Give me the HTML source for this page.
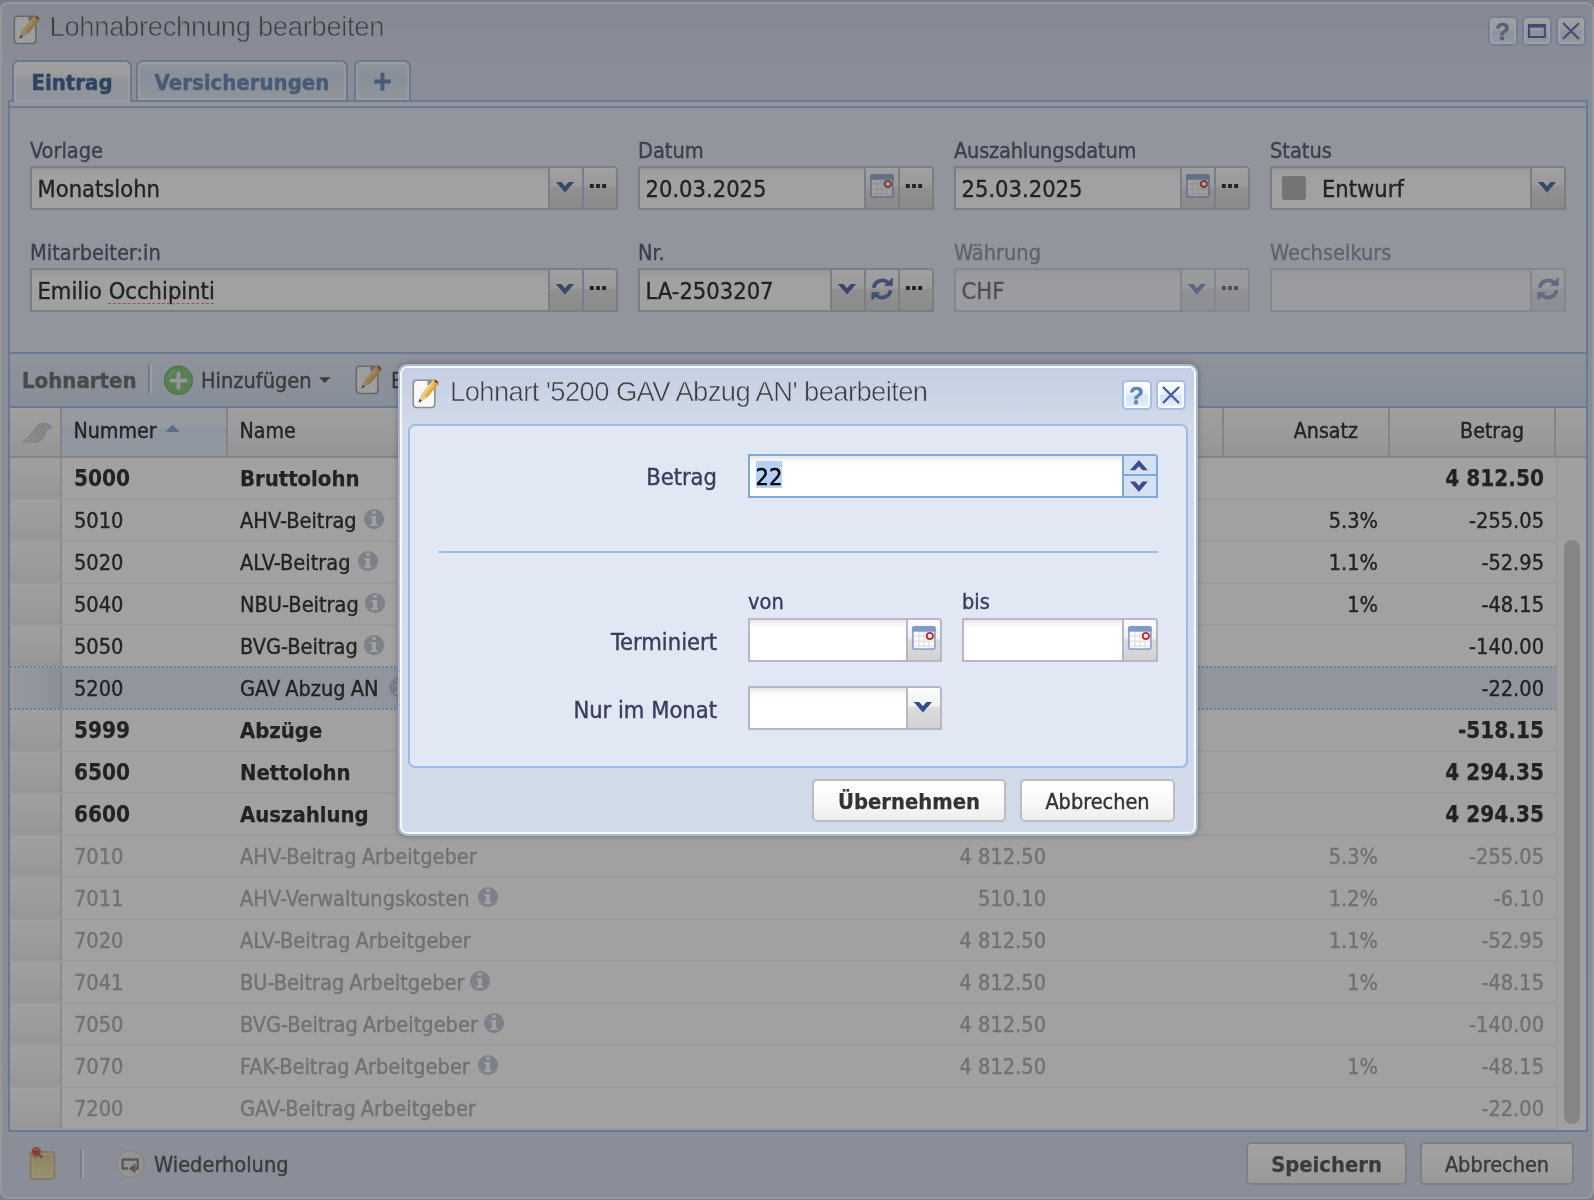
<!DOCTYPE html>
<html lang="de"><head><meta charset="utf-8"><title>Lohnabrechnung bearbeiten</title>
<style>
*{box-sizing:border-box;margin:0;padding:0}
html,body{width:1594px;height:1200px;overflow:hidden}
body{background:#b0bad4;font-family:"DejaVu Sans Condensed","Liberation Sans",sans-serif;font-size:21.6px;color:#000;position:relative;-webkit-text-stroke:.4px}
div,span,i,b{position:absolute;white-space:nowrap;display:block}
svg{position:absolute;left:0;top:0;overflow:visible}
#win{left:0;top:2px;width:1594px;height:1197px;border:2px solid #e6ecf4;border-radius:8px;background:linear-gradient(#c6cee4 0,#cfd6ea 60px,#d0d8ec 100%)}
.title{font-family:"Liberation Sans",sans-serif;font-size:27.4px;color:#3c3c3c;line-height:30px;letter-spacing:-.32px;-webkit-text-stroke:.6px #c7d1e8}
.title.d{letter-spacing:-.6px;-webkit-text-stroke:.6px #cbd4e6}
.tool{width:30px;height:30px;border:2px solid #a3bfec;border-radius:5px;background:linear-gradient(#fff 0,#e9f2fb 49%,#d3e3fa 50%,#e4eefb 100%);box-shadow:inset 0 0 0 2px rgba(255,255,255,.85)}
.tool b{left:0;top:0;width:25px;text-align:center;font-family:"Liberation Sans",sans-serif;font-weight:bold;font-size:24.5px;line-height:27px;color:#5b85b5}
/* tabs */
.tab{top:60px;height:40px;border:2px solid #8db2e3;border-bottom:none;border-radius:7px 7px 0 0;font-weight:bold;font-size:22px;line-height:42px;text-align:center;color:#4a70a8;background:linear-gradient(#eef0f4 0,#d3ddef 5px,#d0dbee 50%,#dfe7f4 100%);box-shadow:inset 0 0 0 2px rgba(255,255,255,.5)}
.tab.act{color:#16427c;background:linear-gradient(#fbfbfb 0,#f4f5f7 12px,#dde6f4 18px,#dbe5f5 100%);height:42px}
#strip{left:8px;top:100px;width:1580px;height:8px;border:2px solid #8db2e3;border-bottom:none;background:#dfe8f7}
#tbody{left:8px;top:106px;width:1580px;height:248px;border:2px solid #8db2e3;background:#e1e7f5}
/* fields */
.lbl{font-size:21.6px;line-height:26px;color:#363959}
.lbl.dis{opacity:.58}
.fld{border-top-right-radius:4px;height:44px;border:2px solid #b5b8c8;background:#fff linear-gradient(#e4e4e4 0,#f3f3f3 3px,#fbfbfb 7px,#fff 11px);font-size:23.5px;line-height:42.6px;color:#000;padding-left:5.5px;overflow:hidden}
.fld.dis{opacity:.6}
.trg{top:0;width:34px;height:40px;border-left:2px solid #b5b8c8;background:linear-gradient(#fdfdfd 0,#f2f2f2 44%,#dcdcdc 50%,#d2d2d2 100%)}
#root{left:0;top:0;width:1594px;height:1200px;will-change:transform}
#mask{left:0;top:0;width:1594px;height:1200px;background:rgba(68,68,68,.5)}
/* grid */
#gtb{left:8px;top:354px;width:1580px;height:53px;border:2px solid #8db2e3;border-top:none;border-bottom:none;background:linear-gradient(#d7e1f4,#cedaf0)}
#grid{left:8px;top:406px;width:1580px;height:726px;border:2px solid #8db2e3;background:#fff;overflow:hidden}
.hd{top:0;height:50px;background:linear-gradient(#fbfbfb 0,#f3f3f3 50%,#e6e6e6 100%);border-right:2px solid #c6c6c6;border-bottom:2px solid #c6c6c6;font-size:21.2px;line-height:46.4px;color:#000;padding:0 11.5px}
.hd.r{text-align:right;padding-right:30px}
.row{left:0;width:1546px;height:42px;border-bottom:2px solid #f0f0f0;background:#fff;font-size:21.6px;line-height:41.4px;color:#000}
.row.b{font-weight:bold;font-size:22.4px;-webkit-text-stroke:.25px}
.row.g{color:#9e9e9e}
.row.sel{background:#dfe8f8}
.row span{top:0}
.row .n{word-spacing:-1.2px}
.row.b .n{font-size:21.9px}
.row i{top:0;left:0;width:52px;height:40px;background:linear-gradient(#fbfbfb 0,#f4f4f4 50%,#eaeaea 100%);border-right:2px solid #d4d4d4}
.row.sel i{background:linear-gradient(90deg,#e9effa 0,#dde5f4 60%,#d0d9ec 100%);border-right-color:#c4c8d2}
.dot{left:0;width:1546px;height:2px;background:repeating-linear-gradient(90deg,#a3bae9 0,#a3bae9 2px,transparent 2px,transparent 4px)}
.btn{height:43px;border:2px solid #bdbdbd;border-radius:5px;background:linear-gradient(#fff 0,#f9f9f9 50%,#ededed 100%);font-size:21.5px;line-height:42.4px;text-align:center;color:#333}
.btn.b{font-weight:bold;font-size:21.8px;-webkit-text-stroke:.25px}
/* dialog */
#dlg{left:398px;top:364px;width:800px;height:472px;border:2px solid #a9b6ce;border-radius:9px;background:linear-gradient(#c5cee3 0,#d1dbe9 60px,#d0dae8 100%);box-shadow:inset 0 0 0 2px #f5f8fc,0 0 6px rgba(0,0,0,.3)}
#dbody{left:408px;top:424px;width:780px;height:344px;border:2px solid #99bbe8;border-radius:7px;background:#e1e8f4}
.dl{font-size:23.5px;line-height:32px;color:#3a3d5c;text-align:right}
.dl2{font-size:21.6px;line-height:28px;color:#3a3d5c}
.fld.foc{border-color:#7eaadb}
.spn{background:#d5e1f2;border-left:2px solid #7eaadb}
.spn.t{border-bottom:2px solid #7eaadb}
</style></head><body><div id="root">
<div id="win"></div>
<svg style="left:12.5px;top:13px" width="30" height="32" viewBox="0 0 30 32">
<rect x="1.3" y="3.3" width="21.5" height="27.2" rx="3.2" fill="#f9f9f9" stroke="#8e8e8e" stroke-width="1.6"/>
<path d="M15.5 3.5 L19.5 3.5 L22.6 6.6 L22.6 8 L15.5 8 Z" fill="#8e8e8e"/>
<g transform="translate(6.3,25.7) rotate(-49.5)">
<path d="M0 0 L4 -1.6 L4 1.6 Z" fill="#4b3f36"/>
<path d="M4 -1.6 L9 -3.4 L9 3.4 L4 1.6 Z" fill="#e3c9a0"/>
<rect x="9" y="-3.4" width="18.5" height="2.3" fill="#f6cc72"/>
<rect x="9" y="-1.1" width="18.5" height="2.2" fill="#eab854"/>
<rect x="9" y="1.1" width="18.5" height="2.3" fill="#d7a143"/>
<ellipse cx="27.5" cy="0" rx="1.8" ry="3.4" fill="#c9a060"/>
<ellipse cx="27.7" cy="0" rx="1" ry="2" fill="#5a452a"/>
</g></svg>
<div class="title" style="left:49.5px;top:12px">Lohnabrechnung bearbeiten</div>
<div class="tool" style="left:1488px;top:16px"><b>?</b></div>
<div class="tool" style="left:1522px;top:16px"><svg width="26" height="26"><rect x="5" y="7" width="15.8" height="12" fill="none" stroke="#3a50a8" stroke-width="2"/><rect x="4" y="6" width="17.8" height="3.6" fill="#3a50a8"/></svg></div>
<div class="tool" style="left:1556px;top:16px"><svg width="26" height="26"><path d="M5 5 L21 21 M21 5 L5 21" stroke="#4a57a5" stroke-width="2.3" fill="none"/></svg></div>
<div id="strip"></div>
<div class="tab act" style="left:12px;width:120px">Eintrag</div>
<div class="tab" style="left:136px;width:212px">Versicherungen</div>
<div class="tab" style="left:354px;width:57px;font-size:27px;line-height:38.6px;-webkit-text-stroke:1px">+</div>
<div id="tbody"></div>
<div class="lbl" style="left:30px;top:138px">Vorlage</div>
<div class="fld" style="left:30px;top:166px;width:588px">Monatslohn<div class="trg" style="left:516px"><svg width="34" height="40"><path d="M5.85 14.10 L11.35 14.10 L15.00 18.30 L18.65 14.10 L24.15 14.10 L15.00 24.60 Z" fill="#2f4b92"/></svg></div><div class="trg" style="left:550px"><svg width="34" height="40"><rect x="5.90" y="15.9" width="3.9" height="4.2" rx="0.5" fill="#000"/><rect x="12.05" y="15.9" width="3.9" height="4.2" rx="0.5" fill="#000"/><rect x="18.20" y="15.9" width="3.9" height="4.2" rx="0.5" fill="#000"/></svg></div></div>
<div class="lbl" style="left:638px;top:138px">Datum</div>
<div class="fld" style="left:638px;top:166px;width:296px">20.03.2025<div class="trg" style="left:224px"><svg width="34" height="40"><g transform="translate(3.95,5.95)">
<rect x="0.9" y="0.9" width="22" height="22.2" rx="2" fill="#fdfdfd" stroke="#8ba4cf" stroke-width="1.8"/>
<path d="M0.9 5 V2.9 Q0.9 0.9 2.9 0.9 H20.9 Q22.9 0.9 22.9 2.9 V5 Z" fill="#7f9acb" stroke="#7f9acb" stroke-width="1.8"/>
<path d="M2.5 9.8H21.5M2.5 15.3H21.5M2.5 20H21.5M7.2 6.5V21.5M12 6.5V21.5M16.8 6.5V21.5" stroke="#e2e2e2" stroke-width="1.4" fill="none"/>
<circle cx="17.9" cy="10" r="3.1" fill="#fff" stroke="#c03030" stroke-width="1.9"/>
</g></svg></div><div class="trg" style="left:258px"><svg width="34" height="40"><rect x="5.90" y="15.9" width="3.9" height="4.2" rx="0.5" fill="#000"/><rect x="12.05" y="15.9" width="3.9" height="4.2" rx="0.5" fill="#000"/><rect x="18.20" y="15.9" width="3.9" height="4.2" rx="0.5" fill="#000"/></svg></div></div>
<div class="lbl" style="left:954px;top:138px;letter-spacing:-.22px">Auszahlungsdatum</div>
<div class="fld" style="left:954px;top:166px;width:296px">25.03.2025<div class="trg" style="left:224px"><svg width="34" height="40"><g transform="translate(3.95,5.95)">
<rect x="0.9" y="0.9" width="22" height="22.2" rx="2" fill="#fdfdfd" stroke="#8ba4cf" stroke-width="1.8"/>
<path d="M0.9 5 V2.9 Q0.9 0.9 2.9 0.9 H20.9 Q22.9 0.9 22.9 2.9 V5 Z" fill="#7f9acb" stroke="#7f9acb" stroke-width="1.8"/>
<path d="M2.5 9.8H21.5M2.5 15.3H21.5M2.5 20H21.5M7.2 6.5V21.5M12 6.5V21.5M16.8 6.5V21.5" stroke="#e2e2e2" stroke-width="1.4" fill="none"/>
<circle cx="17.9" cy="10" r="3.1" fill="#fff" stroke="#c03030" stroke-width="1.9"/>
</g></svg></div><div class="trg" style="left:258px"><svg width="34" height="40"><rect x="5.90" y="15.9" width="3.9" height="4.2" rx="0.5" fill="#000"/><rect x="12.05" y="15.9" width="3.9" height="4.2" rx="0.5" fill="#000"/><rect x="18.20" y="15.9" width="3.9" height="4.2" rx="0.5" fill="#000"/></svg></div></div>
<div class="lbl" style="left:1270px;top:138px">Status</div>
<div class="fld" style="left:1270px;top:166px;width:296px;padding-left:50px"><div style="left:10px;top:8px;width:24px;height:24px;border-radius:3px;background:#a6a6a6"></div>Entwurf<div class="trg" style="left:258px"><svg width="34" height="40"><path d="M5.85 14.10 L11.35 14.10 L15.00 18.30 L18.65 14.10 L24.15 14.10 L15.00 24.60 Z" fill="#2f4b92"/></svg></div></div>
<div class="lbl" style="left:30px;top:240px">Mitarbeiter:in</div>
<div class="fld" style="left:30px;top:268px;width:588px">Emilio <span style="position:static;display:inline;text-decoration:underline dashed #e06a6a 1.2px;text-underline-offset:4px">Occhipinti</span><div class="trg" style="left:516px"><svg width="34" height="40"><path d="M5.85 14.10 L11.35 14.10 L15.00 18.30 L18.65 14.10 L24.15 14.10 L15.00 24.60 Z" fill="#2f4b92"/></svg></div><div class="trg" style="left:550px"><svg width="34" height="40"><rect x="5.90" y="15.9" width="3.9" height="4.2" rx="0.5" fill="#000"/><rect x="12.05" y="15.9" width="3.9" height="4.2" rx="0.5" fill="#000"/><rect x="18.20" y="15.9" width="3.9" height="4.2" rx="0.5" fill="#000"/></svg></div></div>
<div class="lbl" style="left:638px;top:240px">Nr.</div>
<div class="fld" style="left:638px;top:268px;width:296px">LA-2503207<div class="trg" style="left:190px"><svg width="34" height="40"><path d="M5.85 14.10 L11.35 14.10 L15.00 18.30 L18.65 14.10 L24.15 14.10 L15.00 24.60 Z" fill="#2f4b92"/></svg></div><div class="trg" style="left:224px"><svg width="34" height="40"><g transform="translate(16.1,19)" fill="none" stroke-linecap="butt">
<path d="M-8.4 -1.2 A8.5 8.5 0 0 1 6.3 -5.7" stroke="#3f59a0" stroke-width="3.8"/>
<path d="M10.2 -11 L10.2 -3.4 L2.6 -3.4 Z" fill="#3f59a0" stroke="#3f59a0" stroke-width="0.8" stroke-linejoin="round"/>
<path d="M8.4 1.2 A8.5 8.5 0 0 1 -6.3 5.7" stroke="#3f59a0" stroke-width="3.8"/>
<path d="M-10.2 11 L-10.2 3.4 L-2.6 3.4 Z" fill="#3f59a0" stroke="#3f59a0" stroke-width="0.8" stroke-linejoin="round"/>
</g></svg></div><div class="trg" style="left:258px"><svg width="34" height="40"><rect x="5.90" y="15.9" width="3.9" height="4.2" rx="0.5" fill="#000"/><rect x="12.05" y="15.9" width="3.9" height="4.2" rx="0.5" fill="#000"/><rect x="18.20" y="15.9" width="3.9" height="4.2" rx="0.5" fill="#000"/></svg></div></div>
<div class="lbl dis" style="left:954px;top:240px">W&auml;hrung</div>
<div class="fld dis" style="left:954px;top:268px;width:296px">CHF<div class="trg" style="left:224px"><svg width="34" height="40"><path d="M5.85 14.10 L11.35 14.10 L15.00 18.30 L18.65 14.10 L24.15 14.10 L15.00 24.60 Z" fill="#2f4b92"/></svg></div><div class="trg" style="left:258px"><svg width="34" height="40"><rect x="5.90" y="15.9" width="3.9" height="4.2" rx="0.5" fill="#000"/><rect x="12.05" y="15.9" width="3.9" height="4.2" rx="0.5" fill="#000"/><rect x="18.20" y="15.9" width="3.9" height="4.2" rx="0.5" fill="#000"/></svg></div></div>
<div class="lbl dis" style="left:1270px;top:240px">Wechselkurs</div>
<div class="fld dis dis2" style="left:1270px;top:268px;width:296px"><div class="trg" style="left:258px"><svg width="34" height="40"><g transform="translate(16.1,19)" fill="none" stroke-linecap="butt">
<path d="M-8.4 -1.2 A8.5 8.5 0 0 1 6.3 -5.7" stroke="#3f59a0" stroke-width="3.8"/>
<path d="M10.2 -11 L10.2 -3.4 L2.6 -3.4 Z" fill="#3f59a0" stroke="#3f59a0" stroke-width="0.8" stroke-linejoin="round"/>
<path d="M8.4 1.2 A8.5 8.5 0 0 1 -6.3 5.7" stroke="#3f59a0" stroke-width="3.8"/>
<path d="M-10.2 11 L-10.2 3.4 L-2.6 3.4 Z" fill="#3f59a0" stroke="#3f59a0" stroke-width="0.8" stroke-linejoin="round"/>
</g></svg></div></div>
<div id="gtb"></div>
<div style="left:22px;top:366px;font-weight:bold;font-size:22px;line-height:30px;color:#505050">Lohnarten</div>
<div style="left:148px;top:365px;width:2px;height:28px;background:#98b6e6"></div><div style="left:150px;top:365px;width:2px;height:28px;background:#f4f7fc"></div>
<svg style="left:163px;top:364.5px" width="31" height="31"><circle cx="15.4" cy="15.3" r="13.9" fill="#6fbc65" stroke="#5aae54" stroke-width="1.6"/><path d="M6.2 11 A10.5 10.5 0 0 1 12 5.4" stroke="#a5d89d" stroke-width="1.3" fill="none" stroke-linecap="round"/><path d="M15.5 8.5 V22.7 M8.4 15.6 H22.6" stroke="#ececec" stroke-width="3.8" stroke-linecap="round"/></svg>
<div style="left:201px;top:366px;font-size:21.6px;line-height:30px;color:#333">Hinzuf&uuml;gen</div>
<svg style="left:318px;top:376px" width="14" height="8"><path d="M1 1.2 H12.6 L6.8 7 Z" fill="#333"/></svg>
<svg style="left:355px;top:362.5px" width="30" height="32" viewBox="0 0 30 32">
<rect x="1.3" y="3.3" width="21.5" height="27.2" rx="3.2" fill="#f9f9f9" stroke="#8e8e8e" stroke-width="1.6"/>
<path d="M15.5 3.5 L19.5 3.5 L22.6 6.6 L22.6 8 L15.5 8 Z" fill="#8e8e8e"/>
<g transform="translate(6.3,25.7) rotate(-49.5)">
<path d="M0 0 L4 -1.6 L4 1.6 Z" fill="#4b3f36"/>
<path d="M4 -1.6 L9 -3.4 L9 3.4 L4 1.6 Z" fill="#e3c9a0"/>
<rect x="9" y="-3.4" width="18.5" height="2.3" fill="#f6cc72"/>
<rect x="9" y="-1.1" width="18.5" height="2.2" fill="#eab854"/>
<rect x="9" y="1.1" width="18.5" height="2.3" fill="#d7a143"/>
<ellipse cx="27.5" cy="0" rx="1.8" ry="3.4" fill="#c9a060"/>
<ellipse cx="27.7" cy="0" rx="1" ry="2" fill="#5a452a"/>
</g></svg>
<div style="left:391px;top:366px;font-size:21.6px;line-height:30px;color:#333">Bearbeiten</div>
<div id="grid">
<div class="hd " style="left:0px;width:52px"></div>
<div class="hd " style="left:52px;width:166px;background:linear-gradient(#eaf3ff 0,#e6f0ff 19px,#dbe7fd 19px,#dde8fc 100%)">Nummer<svg style="left:103px;top:15.5px" width="16" height="9"><path d="M0.5 8 L7.5 0.8 L14.5 8 Z" fill="#6f94d2"/></svg></div>
<div class="hd " style="left:218px;width:664px">Name</div>
<div class="hd r" style="left:882px;width:166px">Basis</div>
<div class="hd " style="left:1048px;width:166px">Menge</div>
<div class="hd r" style="left:1214px;width:166px">Ansatz</div>
<div class="hd r" style="left:1380px;width:166px">Betrag</div>
<div class="hd " style="left:1546px;width:40px"></div>
<svg style="left:11.4px;top:13.7px" width="33" height="23" viewBox="0 0 33 23"><path d="M0.5 21.5 C7 15 11 10 14 6 C16 2 20 0 24 0.6 C28 1.3 30.5 4 31.8 6.6 L27 7.4 C25.5 9 25 11 24 14 C22.5 18 19 20 15 20.8 C10 21 5 21.3 0.5 21.5 Z" fill="#bfc6cf"/><path d="M3.5 21 L13.5 12.3 M8.5 21 L17 14" stroke="#f4f4f4" stroke-width="1" fill="none"/></svg>
<div class="row b" style="top:50px"><i></i><span style="left:64px">5000</span><span class="n" style="left:230px">Bruttolohn</span><span style="left:882px;width:154px;text-align:right"></span><span style="left:1214px;width:154px;text-align:right"></span><span style="left:1380px;width:154px;text-align:right">4 812.50</span></div>
<div class="row " style="top:92px"><i></i><span style="left:64px">5010</span><span class="n" style="left:230px">AHV-Beitrag</span><svg style="left:351.9px;top:9.2px" width="24" height="22"><g transform="translate(12,10.1)"><circle r="10.15" fill="#b8bed0"/>
<rect x="-2" y="-7.9" width="4.1" height="2.5" fill="#fff"/><path d="M-3.4 -3 H2 V4.9 H3.4 V6.8 H-3.8 V4.9 H-2 V-1.1 H-3.4 Z" fill="#fff"/></g></svg><span style="left:882px;width:154px;text-align:right">4 812.50</span><span style="left:1214px;width:154px;text-align:right">5.3%</span><span style="left:1380px;width:154px;text-align:right">-255.05</span></div>
<div class="row " style="top:134px"><i></i><span style="left:64px">5020</span><span class="n" style="left:230px">ALV-Beitrag</span><svg style="left:345.9px;top:9.2px" width="24" height="22"><g transform="translate(12,10.1)"><circle r="10.15" fill="#b8bed0"/>
<rect x="-2" y="-7.9" width="4.1" height="2.5" fill="#fff"/><path d="M-3.4 -3 H2 V4.9 H3.4 V6.8 H-3.8 V4.9 H-2 V-1.1 H-3.4 Z" fill="#fff"/></g></svg><span style="left:882px;width:154px;text-align:right">4 812.50</span><span style="left:1214px;width:154px;text-align:right">1.1%</span><span style="left:1380px;width:154px;text-align:right">-52.95</span></div>
<div class="row " style="top:176px"><i></i><span style="left:64px">5040</span><span class="n" style="left:230px">NBU-Beitrag</span><svg style="left:352.9px;top:9.2px" width="24" height="22"><g transform="translate(12,10.1)"><circle r="10.15" fill="#b8bed0"/>
<rect x="-2" y="-7.9" width="4.1" height="2.5" fill="#fff"/><path d="M-3.4 -3 H2 V4.9 H3.4 V6.8 H-3.8 V4.9 H-2 V-1.1 H-3.4 Z" fill="#fff"/></g></svg><span style="left:882px;width:154px;text-align:right">4 812.50</span><span style="left:1214px;width:154px;text-align:right">1%</span><span style="left:1380px;width:154px;text-align:right">-48.15</span></div>
<div class="row " style="top:218px"><i></i><span style="left:64px">5050</span><span class="n" style="left:230px">BVG-Beitrag</span><svg style="left:351.9px;top:9.2px" width="24" height="22"><g transform="translate(12,10.1)"><circle r="10.15" fill="#b8bed0"/>
<rect x="-2" y="-7.9" width="4.1" height="2.5" fill="#fff"/><path d="M-3.4 -3 H2 V4.9 H3.4 V6.8 H-3.8 V4.9 H-2 V-1.1 H-3.4 Z" fill="#fff"/></g></svg><span style="left:882px;width:154px;text-align:right">4 812.50</span><span style="left:1214px;width:154px;text-align:right"></span><span style="left:1380px;width:154px;text-align:right">-140.00</span></div>
<div class="row sel" style="top:260px"><i></i><span style="left:64px">5200</span><span class="n" style="left:230px">GAV Abzug AN</span><svg style="left:377.2px;top:9.2px" width="24" height="22"><g transform="translate(12,10.1)"><circle r="10.15" fill="#b8bed0"/>
<rect x="-2" y="-7.9" width="4.1" height="2.5" fill="#fff"/><path d="M-3.4 -3 H2 V4.9 H3.4 V6.8 H-3.8 V4.9 H-2 V-1.1 H-3.4 Z" fill="#fff"/></g></svg><span style="left:882px;width:154px;text-align:right"></span><span style="left:1214px;width:154px;text-align:right"></span><span style="left:1380px;width:154px;text-align:right">-22.00</span></div>
<div class="dot" style="top:258px"></div><div class="dot" style="top:300px"></div>
<div class="row b" style="top:302px"><i></i><span style="left:64px">5999</span><span class="n" style="left:230px">Abz&uuml;ge</span><span style="left:882px;width:154px;text-align:right"></span><span style="left:1214px;width:154px;text-align:right"></span><span style="left:1380px;width:154px;text-align:right">-518.15</span></div>
<div class="row b" style="top:344px"><i></i><span style="left:64px">6500</span><span class="n" style="left:230px">Nettolohn</span><span style="left:882px;width:154px;text-align:right"></span><span style="left:1214px;width:154px;text-align:right"></span><span style="left:1380px;width:154px;text-align:right">4 294.35</span></div>
<div class="row b" style="top:386px"><i></i><span style="left:64px">6600</span><span class="n" style="left:230px">Auszahlung</span><span style="left:882px;width:154px;text-align:right"></span><span style="left:1214px;width:154px;text-align:right"></span><span style="left:1380px;width:154px;text-align:right">4 294.35</span></div>
<div class="row g" style="top:428px"><i></i><span style="left:64px">7010</span><span class="n" style="left:230px">AHV-Beitrag Arbeitgeber</span><span style="left:882px;width:154px;text-align:right">4 812.50</span><span style="left:1214px;width:154px;text-align:right">5.3%</span><span style="left:1380px;width:154px;text-align:right">-255.05</span></div>
<div class="row g" style="top:470px"><i></i><span style="left:64px">7011</span><span class="n" style="left:230px">AHV-Verwaltungskosten</span><svg style="left:465.7px;top:9.2px" width="24" height="22"><g transform="translate(12,10.1)"><circle r="10.15" fill="#b8bed0"/>
<rect x="-2" y="-7.9" width="4.1" height="2.5" fill="#fff"/><path d="M-3.4 -3 H2 V4.9 H3.4 V6.8 H-3.8 V4.9 H-2 V-1.1 H-3.4 Z" fill="#fff"/></g></svg><span style="left:882px;width:154px;text-align:right">510.10</span><span style="left:1214px;width:154px;text-align:right">1.2%</span><span style="left:1380px;width:154px;text-align:right">-6.10</span></div>
<div class="row g" style="top:512px"><i></i><span style="left:64px">7020</span><span class="n" style="left:230px">ALV-Beitrag Arbeitgeber</span><span style="left:882px;width:154px;text-align:right">4 812.50</span><span style="left:1214px;width:154px;text-align:right">1.1%</span><span style="left:1380px;width:154px;text-align:right">-52.95</span></div>
<div class="row g" style="top:554px"><i></i><span style="left:64px">7041</span><span class="n" style="left:230px">BU-Beitrag Arbeitgeber</span><svg style="left:458.4px;top:9.2px" width="24" height="22"><g transform="translate(12,10.1)"><circle r="10.15" fill="#b8bed0"/>
<rect x="-2" y="-7.9" width="4.1" height="2.5" fill="#fff"/><path d="M-3.4 -3 H2 V4.9 H3.4 V6.8 H-3.8 V4.9 H-2 V-1.1 H-3.4 Z" fill="#fff"/></g></svg><span style="left:882px;width:154px;text-align:right">4 812.50</span><span style="left:1214px;width:154px;text-align:right">1%</span><span style="left:1380px;width:154px;text-align:right">-48.15</span></div>
<div class="row g" style="top:596px"><i></i><span style="left:64px">7050</span><span class="n" style="left:230px">BVG-Beitrag Arbeitgeber</span><svg style="left:471.9px;top:9.2px" width="24" height="22"><g transform="translate(12,10.1)"><circle r="10.15" fill="#b8bed0"/>
<rect x="-2" y="-7.9" width="4.1" height="2.5" fill="#fff"/><path d="M-3.4 -3 H2 V4.9 H3.4 V6.8 H-3.8 V4.9 H-2 V-1.1 H-3.4 Z" fill="#fff"/></g></svg><span style="left:882px;width:154px;text-align:right">4 812.50</span><span style="left:1214px;width:154px;text-align:right"></span><span style="left:1380px;width:154px;text-align:right">-140.00</span></div>
<div class="row g" style="top:638px"><i></i><span style="left:64px">7070</span><span class="n" style="left:230px">FAK-Beitrag Arbeitgeber</span><svg style="left:465.8px;top:9.2px" width="24" height="22"><g transform="translate(12,10.1)"><circle r="10.15" fill="#b8bed0"/>
<rect x="-2" y="-7.9" width="4.1" height="2.5" fill="#fff"/><path d="M-3.4 -3 H2 V4.9 H3.4 V6.8 H-3.8 V4.9 H-2 V-1.1 H-3.4 Z" fill="#fff"/></g></svg><span style="left:882px;width:154px;text-align:right">4 812.50</span><span style="left:1214px;width:154px;text-align:right">1%</span><span style="left:1380px;width:154px;text-align:right">-48.15</span></div>
<div class="row g" style="top:680px"><i></i><span style="left:64px">7200</span><span class="n" style="left:230px">GAV-Beitrag Arbeitgeber</span><span style="left:882px;width:154px;text-align:right"></span><span style="left:1214px;width:154px;text-align:right"></span><span style="left:1380px;width:154px;text-align:right">-22.00</span></div>
<div style="left:1546px;top:50px;width:32px;height:676px;background:#fdfdfd;border-left:2px solid #f1f1f1"></div>
<div style="left:1554px;top:132px;width:16px;height:584px;border-radius:8px;background:#c6c6c6"></div>
</div>
<svg style="left:28px;top:1145px" width="30" height="36" viewBox="0 0 30 36"><defs><linearGradient id="ng" x1="0" y1="0" x2="0" y2="1"><stop offset="0" stop-color="#d3c078"/><stop offset="1" stop-color="#eee1a0"/></linearGradient></defs><rect x="2.4" y="6.8" width="24" height="27" rx="2.2" fill="url(#ng)" stroke="#c7ab7c" stroke-width="1.8"/><rect x="4.4" y="8.8" width="20" height="23" rx="1" fill="none" stroke="#f3e8b4" stroke-width="1" opacity=".7"/><path d="M9 8.5 L14.5 12.5" stroke="#666" stroke-width="2.2"/><ellipse cx="7" cy="10.5" rx="3.6" ry="2.4" fill="#000" opacity=".16"/><circle cx="8.3" cy="6.6" r="4.5" fill="#cf3434"/><path d="M6.6 4.4 A3 3 0 0 1 10.6 5.4" stroke="#f1a2a2" stroke-width="1.2" fill="none"/></svg>
<div style="left:80px;top:1150px;width:2px;height:28px;background:#98b6e6"></div><div style="left:82px;top:1150px;width:2px;height:28px;background:#f4f7fc"></div>
<svg style="left:115px;top:1149px" width="32" height="32" viewBox="0 0 32 32"><circle cx="15.3" cy="15" r="13.4" fill="#e9e9e9" stroke="#d0d0d0" stroke-width="2.4"/><circle cx="15.3" cy="15" r="11" fill="#e2e2e2"/><path d="M13 19.5 H7.6 V10.5 H22.8 V19.5 H20.5" fill="none" stroke="#6f6f6f" stroke-width="2.3"/><path d="M20.5 14.5 V24.5 L13.6 19.5 Z" fill="#6f6f6f"/></svg>
<div style="left:154px;top:1150px;font-size:21.6px;line-height:30px;color:#333">Wiederholung</div>
<div class="btn b" style="left:1246px;top:1142px;width:161px">Speichern</div>
<div class="btn" style="left:1420px;top:1142px;width:154px">Abbrechen</div>

<div id="mask"></div>
<div id="dlg"></div>
<div id="dbody"></div>
<svg style="left:412.3px;top:377px" width="30" height="32" viewBox="0 0 30 32">
<rect x="1.3" y="3.3" width="21.5" height="27.2" rx="3.2" fill="#f9f9f9" stroke="#8e8e8e" stroke-width="1.6"/>
<path d="M15.5 3.5 L19.5 3.5 L22.6 6.6 L22.6 8 L15.5 8 Z" fill="#8e8e8e"/>
<g transform="translate(6.3,25.7) rotate(-49.5)">
<path d="M0 0 L4 -1.6 L4 1.6 Z" fill="#4b3f36"/>
<path d="M4 -1.6 L9 -3.4 L9 3.4 L4 1.6 Z" fill="#e3c9a0"/>
<rect x="9" y="-3.4" width="18.5" height="2.3" fill="#f6cc72"/>
<rect x="9" y="-1.1" width="18.5" height="2.2" fill="#eab854"/>
<rect x="9" y="1.1" width="18.5" height="2.3" fill="#d7a143"/>
<ellipse cx="27.5" cy="0" rx="1.8" ry="3.4" fill="#c9a060"/>
<ellipse cx="27.7" cy="0" rx="1" ry="2" fill="#5a452a"/>
</g></svg>
<div class="title d" style="left:450px;top:377px">Lohnart '5200 GAV Abzug AN' bearbeiten</div>
<div class="tool" style="left:1122px;top:380px"><b>?</b></div>
<div class="tool" style="left:1156px;top:380px"><svg width="26" height="26"><path d="M5 5 L21 21 M21 5 L5 21" stroke="#4a57a5" stroke-width="2.3" fill="none"/></svg></div>
<div class="dl" style="left:517px;width:200px;top:461px">Betrag</div>
<div class="fld foc" style="left:748px;top:454px;width:410px"><div style="left:5.5px;top:5px;width:26.5px;height:27px;background:#b5d1f5"></div><span style="position:relative">22</span><div class="spn t" style="left:372px;top:0;width:34px;height:20px"></div><div class="spn" style="left:372px;top:20px;width:34px;height:20px"></div><svg width="406" height="40" style="left:0;top:0"><path d="M379.93 14.25 L385.32 14.25 L388.90 10.13 L392.48 14.25 L397.87 14.25 L388.90 3.96 Z" fill="#3b4c8f"/><path d="M379.93 25.60 L385.32 25.60 L388.90 29.72 L392.48 25.60 L397.87 25.60 L388.90 35.89 Z" fill="#3b4c8f"/></svg></div>
<div style="left:438px;top:551px;width:720px;height:2px;background:#9bbce9"></div>
<div class="dl2" style="left:748px;top:587.5px">von</div>
<div class="dl2" style="left:962px;top:587.5px">bis</div>
<div class="dl" style="left:517px;width:200px;top:626px">Terminiert</div>
<div class="fld" style="left:748px;top:618px;width:194px"><div class="trg" style="left:156px"><svg width="34" height="41"><g transform="translate(3.95,5.95)">
<rect x="0.9" y="0.9" width="22" height="22.2" rx="2" fill="#fdfdfd" stroke="#8ba4cf" stroke-width="1.8"/>
<path d="M0.9 5 V2.9 Q0.9 0.9 2.9 0.9 H20.9 Q22.9 0.9 22.9 2.9 V5 Z" fill="#7f9acb" stroke="#7f9acb" stroke-width="1.8"/>
<path d="M2.5 9.8H21.5M2.5 15.3H21.5M2.5 20H21.5M7.2 6.5V21.5M12 6.5V21.5M16.8 6.5V21.5" stroke="#e2e2e2" stroke-width="1.4" fill="none"/>
<circle cx="17.9" cy="10" r="3.1" fill="#fff" stroke="#c03030" stroke-width="1.9"/>
</g></svg></div></div>
<div class="fld" style="left:962px;top:618px;width:196px"><div class="trg" style="left:158px"><svg width="34" height="41"><g transform="translate(3.95,5.95)">
<rect x="0.9" y="0.9" width="22" height="22.2" rx="2" fill="#fdfdfd" stroke="#8ba4cf" stroke-width="1.8"/>
<path d="M0.9 5 V2.9 Q0.9 0.9 2.9 0.9 H20.9 Q22.9 0.9 22.9 2.9 V5 Z" fill="#7f9acb" stroke="#7f9acb" stroke-width="1.8"/>
<path d="M2.5 9.8H21.5M2.5 15.3H21.5M2.5 20H21.5M7.2 6.5V21.5M12 6.5V21.5M16.8 6.5V21.5" stroke="#e2e2e2" stroke-width="1.4" fill="none"/>
<circle cx="17.9" cy="10" r="3.1" fill="#fff" stroke="#c03030" stroke-width="1.9"/>
</g></svg></div></div>
<div class="dl" style="left:517px;width:200px;top:694px">Nur im Monat</div>
<div class="fld" style="left:748px;top:686px;width:194px"><div class="trg" style="left:156px"><svg width="34" height="41"><path d="M5.75 14.05 L11.25 14.05 L14.90 18.25 L18.55 14.05 L24.05 14.05 L14.90 24.55 Z" fill="#2f4b92"/></svg></div></div>
<div class="btn b" style="left:812px;top:778.5px;width:194px">&Uuml;bernehmen</div>
<div class="btn" style="left:1020px;top:778.5px;width:155px">Abbrechen</div>

</div></body></html>
